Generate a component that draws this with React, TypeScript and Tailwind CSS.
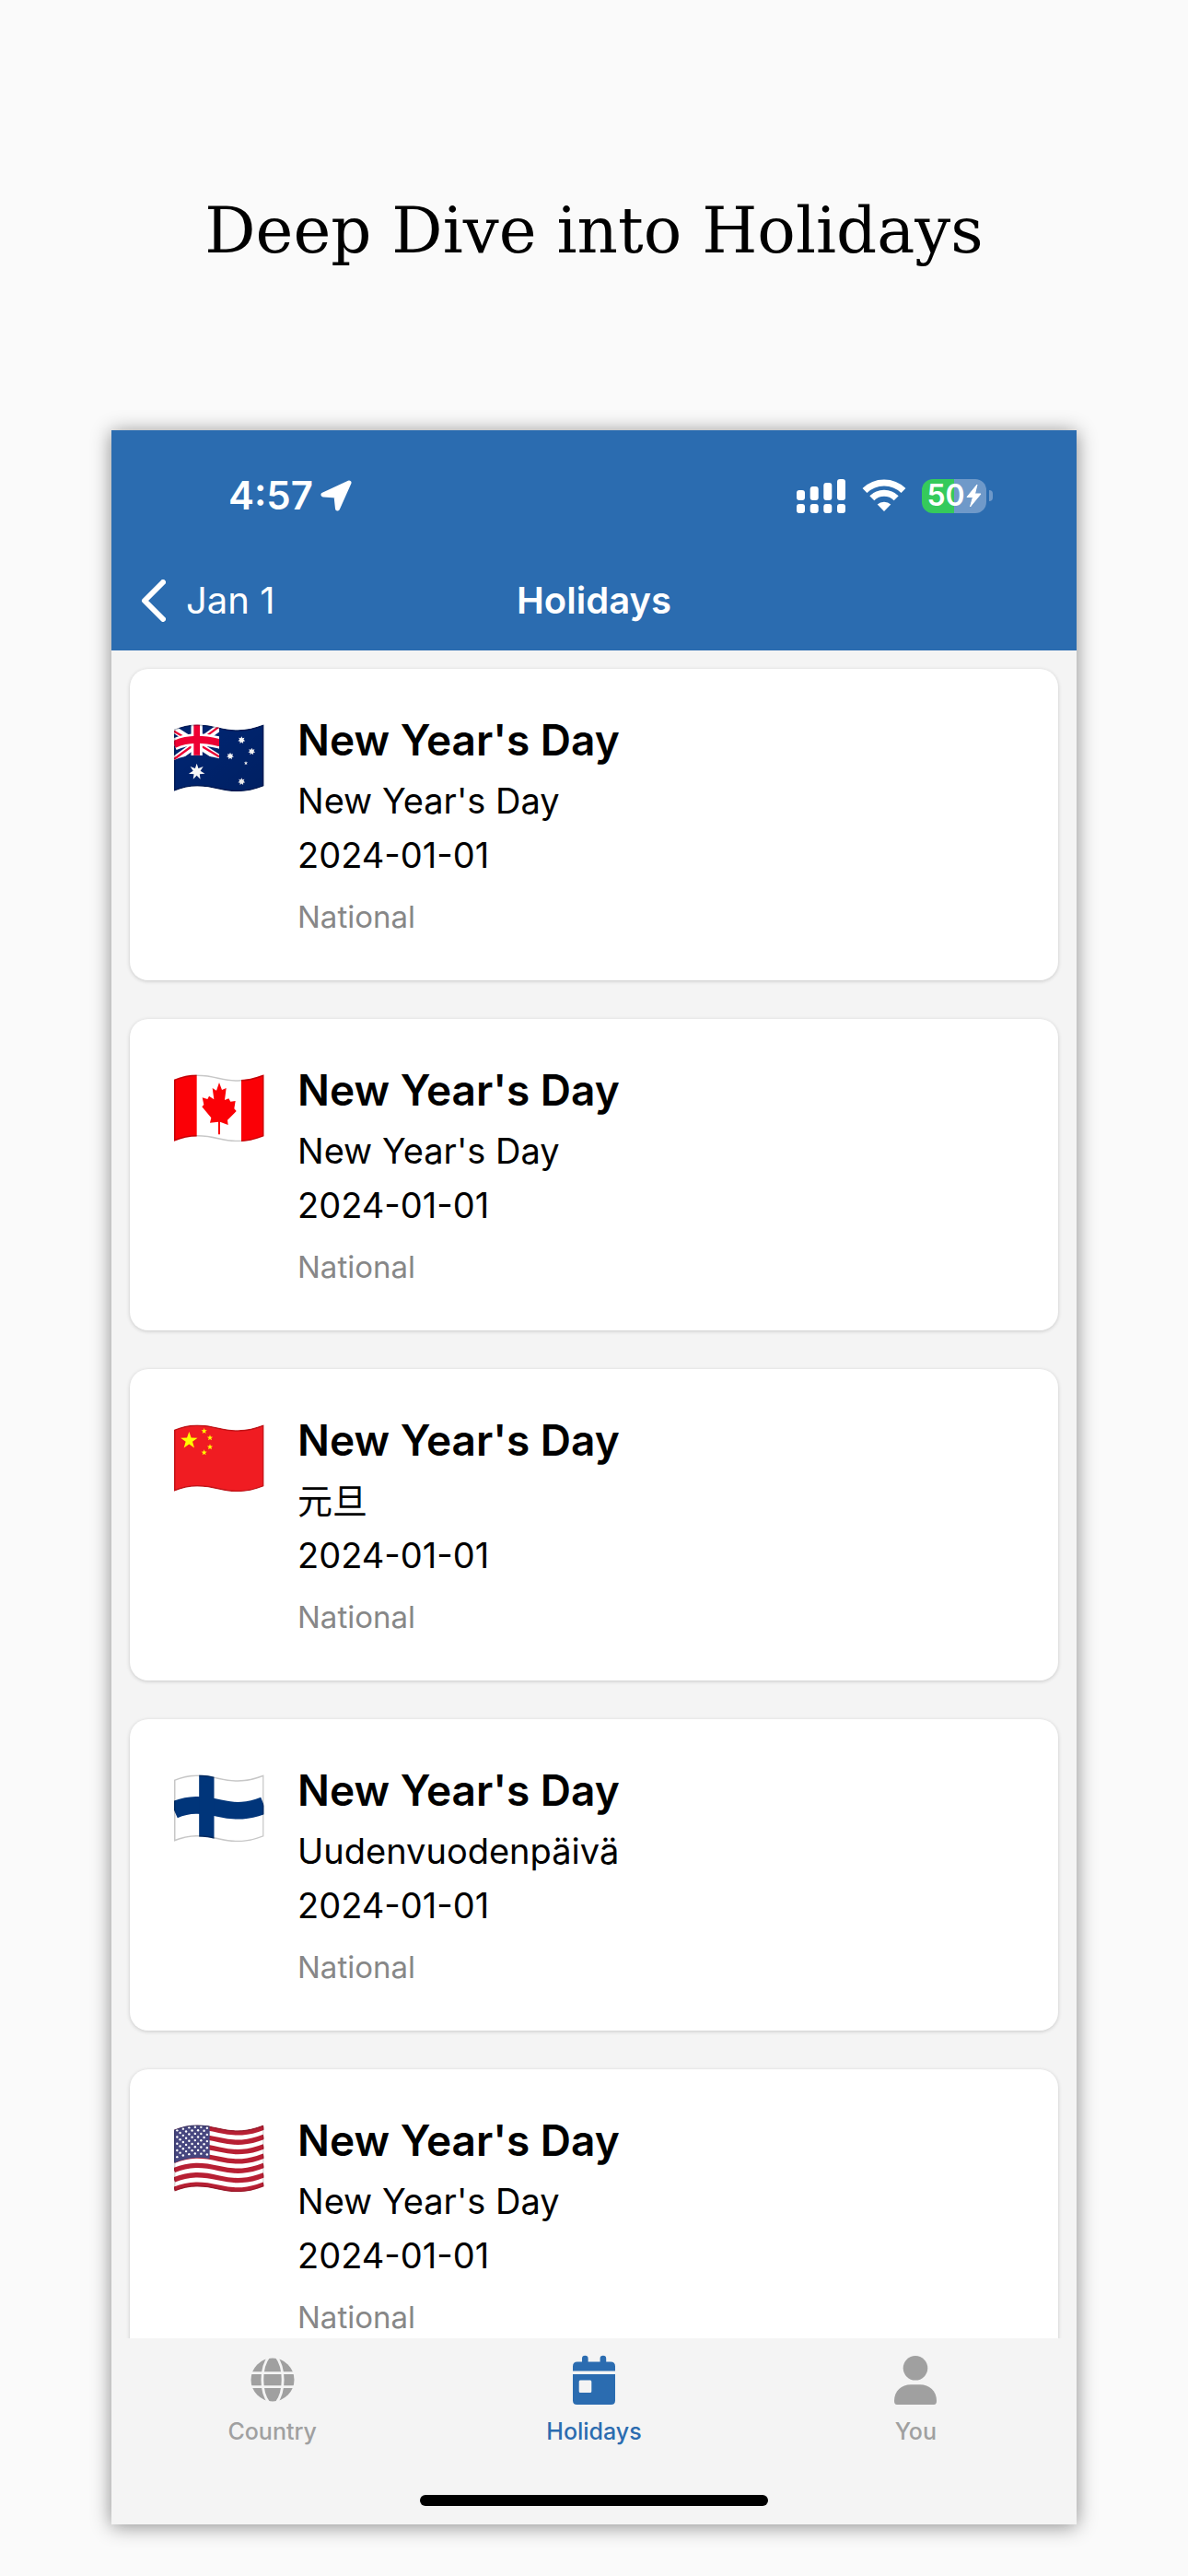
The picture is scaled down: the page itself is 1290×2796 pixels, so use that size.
import React from "react";

type Holiday = {
  country: string;
  localName: string;
  flag: React.ReactNode;
};

const WAVE = "M57 93 C105 72 150 74 204 87 S300 97 350 77";
const OUTLINE =
  "M57 93 C105 72 150 74 204 87 S300 97 350 77 V278 C300 298 258 301 204 288 C150 275 105 273 57 294 Z";

function starPoints(cx: number, cy: number, r: number, n = 5, inner = 0.4) {
  const pts: string[] = [];
  for (let i = 0; i < n * 2; i++) {
    const a = (Math.PI * i) / n - Math.PI / 2;
    const d = i % 2 ? r * inner : r;
    pts.push(`${cx + d * Math.cos(a)},${cy + d * Math.sin(a)}`);
  }
  return pts.join(" ");
}

function Flag({
  id,
  label,
  edge,
  children,
}: {
  id: string;
  label: string;
  edge: string;
  children: React.ReactNode;
}) {
  return (
    <svg
      viewBox="57 76 294 222"
      className="w-[98px] h-[74px] mt-3 shrink-0"
      role="img"
      aria-label={label}
    >
      <defs>
        <clipPath id={`${id}-clip`}>
          <path d={OUTLINE} />
        </clipPath>
        <linearGradient id={`${id}-shade`} x1="0" y1="0" x2="1" y2="1">
          <stop offset="0.3" stopColor="#000" stopOpacity="0" />
          <stop offset="1" stopColor="#000" stopOpacity="0.12" />
        </linearGradient>
      </defs>
      <g clipPath={`url(#${id}-clip)`}>
        {children}
        <path d={OUTLINE} fill="none" stroke={edge} strokeWidth="9" />
      </g>
    </svg>
  );
}

function Australia() {
  return (
    <Flag id="au" label="Australia" edge="rgba(0,0,20,0.25)">
      <path d={OUTLINE} fill="#00246f" />
      <clipPath id="au-jack">
        <path d="M57 60 H204 V188 C150 174 105 172 57 193 Z" />
      </clipPath>
      <g clipPath="url(#au-jack)">
        <path d="M57 93 L204 187 M57 193 L204 87" stroke="#fff" strokeWidth="23" />
        <path d="M57 99 L131 143 M204 182 L131 138" stroke="#ee0033" strokeWidth="7" />
        <path d="M57 190 L131 136 M204 84 L131 138" stroke="#ee0033" strokeWidth="7" />
        <path d={WAVE} transform="translate(0 49)" fill="none" stroke="#fff" strokeWidth="39" />
        <path d="M131 60 V200" stroke="#fff" strokeWidth="37" />
        <path d={WAVE} transform="translate(0 49)" fill="none" stroke="#ee0033" strokeWidth="24" />
        <path d="M131 60 V200" stroke="#ee0033" strokeWidth="20" />
      </g>
      <g fill="#fff">
        <polygon points={starPoints(131, 231, 27, 7, 0.45)} />
        <polygon points={starPoints(277, 128, 12, 7, 0.55)} />
        <polygon points={starPoints(310, 165, 12, 7, 0.55)} />
        <polygon points={starPoints(240, 180, 12, 7, 0.55)} />
        <polygon points={starPoints(277, 263, 12, 7, 0.55)} />
        <polygon points={starPoints(291, 203, 7)} />
      </g>
      <path d={OUTLINE} fill="url(#au-shade)" />
    </Flag>
  );
}

function Canada() {
  return (
    <Flag id="ca" label="Canada" edge="rgba(0,0,0,0.22)">
      <path d={OUTLINE} fill="#fff" />
      <path d="M57 60 H131 V300 H57 Z M276 60 H351 V300 H276 Z" fill="#fb0006" />
      <path
        d="M204 103 L213 127 L227 121 L222 160 L235 155 L241 165 L257 163 L253 188 L260 196 L231 225 L233 241 L207 231 V272 H201 V231 L174 234 L178 218 L148 182 L154 175 L149 152 L166 157 L171 147 L187 158 L182 121 L195 129 Z"
        fill="#fb0006"
      />
    </Flag>
  );
}

function China() {
  return (
    <Flag id="cn" label="China" edge="rgba(90,0,0,0.3)">
      <path d={OUTLINE} fill="#f01c22" />
      <g fill="#ffff00">
        <polygon points={starPoints(106, 129, 29)} />
        <polygon points={starPoints(155, 98, 10)} />
        <polygon points={starPoints(174, 120, 10)} />
        <polygon points={starPoints(174, 150, 10)} />
        <polygon points={starPoints(155, 168, 10)} />
      </g>
    </Flag>
  );
}

function Finland() {
  return (
    <Flag id="fi" label="Finland" edge="rgba(0,0,0,0.22)">
      <path d={OUTLINE} fill="#fff" />
      <path d={WAVE} transform="translate(0 99)" fill="none" stroke="#00357a" strokeWidth="56" />
      <path d="M163 60 V300" stroke="#00357a" strokeWidth="49" />
    </Flag>
  );
}

function UnitedStates() {
  return (
    <Flag id="us" label="United States" edge="rgba(0,0,0,0.15)">
      <path d={OUTLINE} fill="#fff" />
      {[0, 1, 2, 3, 4, 5, 6].map((i) => (
        <path
          key={i}
          d={WAVE}
          transform={`translate(0 ${8 + 31 * i})`}
          fill="none"
          stroke="#b71f33"
          strokeWidth="16"
        />
      ))}
      <path d="M57 60 H173 V188 C140 180 95 184 57 201 Z" fill="#46467f" />
      {Array.from({ length: 9 }).map((_, row) =>
        Array.from({ length: row % 2 ? 5 : 6 }).map((_, col) => {
          const x = 67 + col * 19.5 + (row % 2 ? 9.75 : 0);
          const y = 98 + row * 10.8 - 14 * Math.sin(((x - 57) / 150) * Math.PI);
          return <circle key={`${row}-${col}`} cx={x} cy={y} r="3.6" fill="#fff" />;
        })
      )}
    </Flag>
  );
}

const holidays: Holiday[] = [
  { country: "au", localName: "New Year's Day", flag: <Australia /> },
  { country: "ca", localName: "New Year's Day", flag: <Canada /> },
  { country: "cn", localName: "元旦", flag: <China /> },
  { country: "fi", localName: "Uudenvuodenpäivä", flag: <Finland /> },
  { country: "us", localName: "New Year's Day", flag: <UnitedStates /> },
];

function StatusBar() {
  return (
    <div className="flex justify-between items-center h-[142px] pl-[127px] pr-[91px]">
      <div className="flex items-center gap-2">
        <span className="text-[42px] leading-12 font-semibold">4:57</span>
        <svg viewBox="0 0 34 34" className="w-[34px] h-[34px]" aria-hidden="true">
          <path
            d="M31 3 L3 16 L17 17 L18.500 31 Z"
            fill="#fff"
            stroke="#fff"
            strokeWidth="5"
            strokeLinejoin="round"
          />
        </svg>
      </div>

      <div className="flex items-center">
        {/* signal */}
        <svg viewBox="0 0 54 37" className="w-[54px] h-[37px]" fill="#fff" aria-hidden="true">
          <rect x="0" y="12" width="9" height="11" rx="3" />
          <rect x="14.7" y="8" width="9" height="15" rx="3" />
          <rect x="29.3" y="4" width="9" height="19" rx="3" />
          <rect x="44" y="0" width="9" height="23" rx="3" />
          <rect x="0" y="27" width="9" height="10" rx="3" />
          <rect x="14.7" y="27" width="9" height="10" rx="3" />
          <rect x="29.3" y="27" width="9" height="10" rx="3" />
          <rect x="44" y="27" width="9" height="10" rx="3" />
        </svg>
        {/* wifi */}
        <svg viewBox="0 0 48 36" className="w-12 h-9 ml-[17px]" aria-hidden="true">
          <g fill="none" stroke="#fff" strokeWidth="7">
            <path d="M3 12.6 A30 30 0 0 1 45 12.6" />
            <path d="M10.8 20.7 A18.6 18.6 0 0 1 37.2 20.7" />
          </g>
          <path d="M24 35 L16.7 27.6 A10.5 10.5 0 0 1 31.3 27.6 Z" fill="#fff" />
        </svg>
        {/* battery */}
        <div className="flex items-center ml-[17px] gap-[3px]">
          <div className="flex items-center justify-center gap-px w-[70px] h-[37px] rounded-xl bg-linear-to-r from-[#35ca5b] from-50% to-[#6f99c9] to-50%">
            <span className="text-[32px] leading-9 font-semibold">50</span>
            <svg viewBox="0 0 17 26" className="w-[17px] h-[26px] shrink-0" aria-hidden="true">
              <path
                d="M12 1 L1 14.5 H7.5 L4.5 25 L16 11 H9.5 Z"
                fill="#fff"
                stroke="#fff"
                strokeWidth="1"
                strokeLinejoin="round"
              />
            </svg>
          </div>
          <div className="w-1 h-3 rounded-r-full bg-[#6f99c9]" />
        </div>
      </div>
    </div>
  );
}

function HolidayCard({ holiday }: { holiday: Holiday }) {
  return (
    <li className="flex gap-9 p-12 shrink-0 rounded-[20px] bg-white shadow-[0_1px_4px_rgba(0,0,0,0.18)]">
      {holiday.flag}
      <div className="flex flex-col text-black">
        <h2 className="text-[46px] leading-[58px] font-semibold">New Year&apos;s Day</h2>
        <p className="text-[38px] leading-[59px] mt-2">{holiday.localName}</p>
        <p className="text-[38px] leading-[59px]">2024-01-01</p>
        <p className="text-[33px] leading-[42px] mt-4 text-[#878787]">National</p>
      </div>
    </li>
  );
}

function TabBar() {
  return (
    <nav className="flex flex-col items-center pb-5 bg-[#f4f4f4]">
      <div className="grid grid-cols-3 w-full pt-[18px] text-[25px] leading-8 font-medium text-[#a0a0a0]">
        <a href="#country" className="flex flex-col items-center gap-[11px]">
          <svg viewBox="0 0 56 56" className="w-14 h-14" aria-hidden="true">
            <circle cx="28" cy="27" r="23.5" fill="currentColor" />
            <g fill="none" stroke="#f4f4f4" strokeWidth="2.8">
              <path d="M4 19.6 H52 M4 34.6 H52" />
              <path d="M24 2 C14.5 14 14.5 40 24 52 M32 2 C41.5 14 41.5 40 32 52" />
            </g>
          </svg>
          Country
        </a>
        <a href="#holidays" className="flex flex-col items-center gap-[11px] text-[#2b6cb0]">
          <svg viewBox="0 0 56 56" className="w-14 h-14" aria-hidden="true">
            <path
              d="M5 17.5 V12.5 Q5 7.5 10 7.5 H15 V4 A3.3 3.3 0 0 1 21.6 4 V7.5 H34.6 V4 A3.3 3.3 0 0 1 41.2 4 V7.5 H46 Q51 7.5 51 12.5 V17.5 Z"
              fill="currentColor"
            />
            <path
              fillRule="evenodd"
              d="M5 21 H51 V49.5 Q51 54 46.5 54 H9.5 Q5 54 5 49.5 Z M13 27.5 Q11.7 27.5 11.7 29 V39.5 Q11.7 41 13 41 H24 Q25.3 41 25.3 39.5 V29 Q25.3 27.5 24 27.5 Z"
              fill="currentColor"
            />
          </svg>
          Holidays
        </a>
        <a href="#you" className="flex flex-col items-center gap-[11px]">
          <svg viewBox="0 0 56 56" className="w-14 h-14" fill="currentColor" aria-hidden="true">
            <circle cx="28" cy="14.3" r="13.3" />
            <path d="M5 50 C5 39 13 32.3 23 32.3 H33 C43 32.3 51 39 51 50 Q51 54 48 54 H8 Q5 54 5 50 Z" />
          </svg>
          You
        </a>
      </div>
      {/* home indicator */}
      <div className="w-[36%] h-3 mt-[53px] rounded-full bg-black" />
    </nav>
  );
}

export default function App() {
  return (
    <div className="flex flex-col h-screen pb-14 bg-[#fafafa] font-['Inter','Noto_Sans_CJK_SC',sans-serif]">
      <h1 className="pt-[210px] pb-[177px] text-center text-[69px] leading-20 text-black font-['DejaVu_Serif',serif]">
        Deep Dive into Holidays
      </h1>

      <main className="flex flex-col flex-1 min-h-0 mx-[121px] bg-[#f4f4f4] shadow-[0_2px_20px_rgba(0,0,0,0.45)]">
        <header className="pb-3 bg-[#2b6cb0] text-white">
          <StatusBar />
          <div className="grid grid-cols-3 items-center h-[85px] px-8 text-[40px] leading-12">
            <button className="flex items-center gap-[22px]">
              <svg viewBox="0 0 27 46" className="w-[27px] h-[46px]" aria-hidden="true">
                <path
                  d="M24 3 L4 23 L24 43"
                  fill="none"
                  stroke="#fff"
                  strokeWidth="6"
                  strokeLinecap="round"
                  strokeLinejoin="round"
                />
              </svg>
              Jan 1
            </button>
            <span className="text-center font-semibold">Holidays</span>
          </div>
        </header>

        <ul className="flex flex-col flex-1 min-h-0 gap-[42px] px-5 pt-5 overflow-hidden">
          {holidays.map((holiday) => (
            <HolidayCard key={holiday.country} holiday={holiday} />
          ))}
        </ul>

        <TabBar />
      </main>
    </div>
  );
}
